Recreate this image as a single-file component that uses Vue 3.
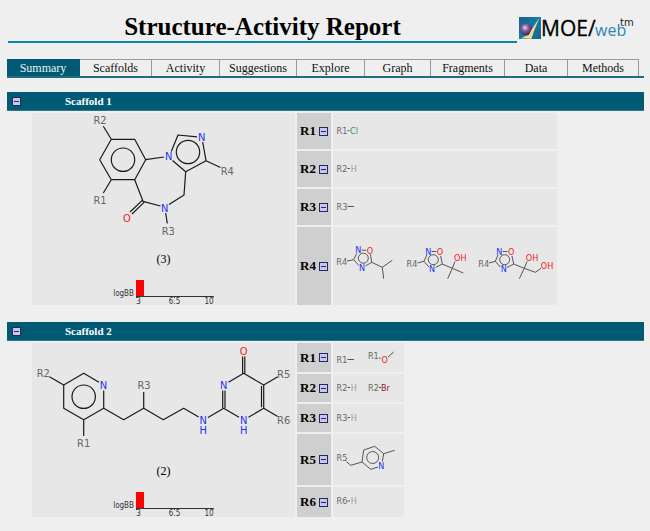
<script setup>
import { reactive } from 'vue'

const tabs = ['Summary', 'Scaffolds', 'Activity', 'Suggestions', 'Explore', 'Graph', 'Fragments', 'Data', 'Methods']

// atom: [x, y, label, kind, label below]; circle: [x, y, radius]
const scaffolds = reactive([
  {
    name: 'Scaffold 1',
    count: 3,
    open: true,
    box: [32, 113, 263, 137],
    bonds:
      'M111.3 139.3H134.7L145.7 159.7L134.7 179.7H111.3L99.7 159.7ZM103.3 126.3L111.3 139.3M103.3 193L111.3 179.7' +
      'M145.7 159.7L164 157M171.3 151.5L178 135L197 136.8M202.7 142L206 160.7L185.7 171.7L172.5 160.5M206 160.7L220.5 167.5' +
      'M185.7 171.7L184 195L169 204.5M160.5 206L143 201.3L134.7 179.7M142.2 200.4L130 212M144 202.4L132 214M165.7 213L167.3 223.5',
    circles: [[123, 159.7, 11.7], [188, 152, 11.7]],
    atoms: [
      [100, 119.7, 'R2', 'r'], [100, 200, 'R1', 'r'], [227.3, 170.7, 'R4', 'r'], [168.3, 230.7, 'R3', 'r'],
      [168.7, 156, 'N', 'n'], [201.7, 137.3, 'N', 'n'], [164.7, 207.5, 'N', 'n'], [127, 218.3, 'O', 'o']
    ],
    groups: [
      { name: 'R1', open: true, mols: [{ box: [333, 113, 224, 36], bonds: 'M347.5 130.7H349.5', circles: [], atoms: [[342, 130.7, 'R1', 'r'], [354, 130.7, 'Cl', 'cl']] }] },
      { name: 'R2', open: true, mols: [{ box: [333, 151, 224, 36], bonds: 'M347.5 168.5H350', circles: [], atoms: [[342, 168.7, 'R2', 'r'], [353.7, 168.7, 'H', 'h']] }] },
      { name: 'R3', open: true, mols: [{ box: [333, 189, 224, 36], bonds: 'M347.5 206.5H354', circles: [], atoms: [[342, 206.7, 'R3', 'r']] }] },
      {
        name: 'R4',
        open: true,
        mols: [
          {
            box: [333, 227, 72, 78],
            bonds: 'M347 261L353.7 259.7L356.7 253.5M361.5 250.2H366.5M370.5 254.5L371.7 262.3L365.5 266M358.8 265.5L353.7 259.7M371.7 262.3L382.3 267.3L392.3 260.3M382.3 267.3L383.7 278.7',
            circles: [[363.3, 258.2, 5]],
            atoms: [[341.7, 262, 'R4', 'r'], [358.3, 250.3, 'N', 'n'], [370, 250.7, 'O', 'o'], [362, 268, 'N', 'n']]
          },
          {
            box: [405, 227, 72, 78],
            bonds: 'M417.5 263L424 261.3L426.8 255M431.5 251.5H436.5M440.7 256L442.3 264L435.5 267.5M428.8 267L424 261.3M442.3 264L452.3 268.3L463.3 273M452.3 268.3L447.7 278.7M452.3 268.3L455 261.5',
            circles: [[433.3, 259.7, 5]],
            atoms: [[412, 264, 'R4', 'r'], [428.3, 251.5, 'N', 'n'], [440, 252, 'O', 'o'], [432, 269.3, 'N', 'n'], [460.3, 258, 'OH', 'o']]
          },
          {
            box: [477, 227, 80, 78],
            bonds: 'M489 263L495.3 261.3L498 255M502.5 251.5H507.5M512 256L513.7 264L507 267.5M500.3 267L495.3 261.3M513.7 264L524.3 268.3L535.3 272.3L541 268.3M524.3 268.3L519.3 278.7M524.3 268.3L527 261.5',
            circles: [[504.7, 259.7, 5]],
            atoms: [[483.7, 264, 'R4', 'r'], [499.3, 251.5, 'N', 'n'], [511.3, 252, 'O', 'o'], [503.7, 269.3, 'N', 'n'], [532, 258, 'OH', 'o'], [547, 266, 'OH', 'o']]
          }
        ]
      }
    ]
  },
  {
    name: 'Scaffold 2',
    count: 2,
    open: true,
    box: [32, 343, 263, 118],
    bonds:
      'M99 381.3L83.7 372.3L63.7 384V407.3L83.7 418.7L103.7 407.3V389.5M63.7 384L49.5 375.8M83.7 418.7V435' +
      'M103.7 407.3L123.7 418.7L143.7 407.3L163.3 418.7L183.7 407.3L198.7 416M143.7 407.3V391M208 416.5L223.7 407.3' +
      'M222.7 389.5V407M225 389.5V407M228.5 381.3L243.7 372.3L263.7 384V407.3L248.5 416.3M261.5 385V406.3M242.6 355.5V372.3M244.8 355.5V372.3' +
      'M223.7 407.3L239 416.3M263.7 384L277.7 375.8M263.7 407.3L277.7 415.5',
    circles: [[83.7, 395.7, 11.7]],
    atoms: [
      [43.3, 372.3, 'R2', 'r'], [83.7, 442, 'R1', 'r'], [144, 384, 'R3', 'r'], [283.7, 372.5, 'R5', 'r'], [283.7, 419, 'R6', 'r'],
      [103.5, 384, 'N', 'n'], [203.3, 419, 'N', 'n', 'H'], [223.7, 384, 'N', 'n'],
      [243.7, 419, 'N', 'n', 'H'], [243.7, 349.5, 'O', 'o']
    ],
    groups: [
      {
        name: 'R1',
        open: true,
        mols: [
          { box: [333, 343, 31, 29], bonds: 'M347.5 359.5H354', circles: [], atoms: [[342, 360, 'R1', 'r']] },
          { box: [364, 343, 40, 29], bonds: 'M379 357.7L380.7 358.5M388 357L393.7 352', circles: [], atoms: [[373.3, 356.2, 'R1', 'r'], [384.7, 360, 'O', 'o']] }
        ]
      },
      {
        name: 'R2',
        open: true,
        mols: [
          { box: [333, 374, 31, 28], bonds: 'M347.5 387.5H350', circles: [], atoms: [[342, 387.7, 'R2', 'r'], [353.7, 387.7, 'H', 'h']] },
          { box: [364, 374, 40, 28], bonds: 'M379 387.5H381', circles: [], atoms: [[373.5, 387.7, 'R2', 'r'], [385.5, 387.7, 'Br', 'br']] }
        ]
      },
      { name: 'R3', open: true, mols: [{ box: [333, 404, 71, 28], bonds: 'M347.5 417.5H350', circles: [], atoms: [[342, 417.7, 'R3', 'r'], [353.7, 417.7, 'H', 'h']] }] },
      {
        name: 'R5',
        open: true,
        mols: [
          {
            box: [333, 434, 71, 51],
            bonds: 'M346.5 461.7L350.7 465.3L362 462L363.7 450L374.7 446.3L383.7 453.7L382.3 461.5M378 467L370.7 469.3L362 462M383.7 453.7L394.7 450.3',
            circles: [[372.7, 457.5, 6]],
            atoms: [[342, 457.7, 'R5', 'r'], [381.3, 465.7, 'N', 'n']]
          }
        ]
      },
      { name: 'R6', open: true, mols: [{ box: [333, 487, 71, 30], bonds: 'M347.5 501H350', circles: [], atoms: [[342, 501, 'R6', 'r'], [353.7, 501, 'H', 'h']] }] }
    ]
  }
])
</script>

<template>
  <div class="page">
    <header class="masthead">
      <h1>Structure-Activity Report</h1>
      <svg class="logo" viewBox="518 13 118 30" width="118" height="30" role="img" aria-label="MOE/web">
        <defs>
          <linearGradient id="tile" x1="0" y1="0" x2="1" y2="1">
            <stop offset="0" stop-color="#1d5f86" />
            <stop offset="0.5" stop-color="#127ba8" />
            <stop offset="1" stop-color="#17648c" />
          </linearGradient>
          <radialGradient id="ball" cx="0.38" cy="0.35" r="0.7">
            <stop offset="0" stop-color="#e6d3ea" />
            <stop offset="0.4" stop-color="#8a5c9c" />
            <stop offset="1" stop-color="#35174c" />
          </radialGradient>
        </defs>
        <rect x="519" y="17" width="22" height="22" fill="url(#tile)" />
        <path d="M534 29L530 33.5L521 38.5H531Z" fill="#f3dc8c" />
        <circle cx="526.500" cy="29.500" r="6" fill="url(#ball)" />
        <path d="M539.500 17.500L532 29L527 38.500H531.500L534 31Z" fill="#f3dc8c" />
        <text class="logo-main" x="541" y="36">MOE/</text>
        <text class="logo-web" x="595" y="36">web<tspan class="logo-tm" x="620" y="26">tm</tspan></text>
      </svg>
    </header>

    <nav class="tabs" aria-label="Report sections">
      <a v-for="(tab, i) in tabs" :key="tab" href="#" :class="{ active: i === 0 }">{{ tab }}</a>
    </nav>

    <section v-for="s in scaffolds" :key="s.name" class="scaffold">
      <div class="bar">
        <button type="button" class="toggle" :aria-label="'Toggle ' + s.name" :aria-expanded="s.open" @click="s.open = !s.open"></button>
        <h2>{{ s.name }}</h2>
      </div>
      <table v-show="s.open">
        <tbody>
          <tr v-for="(g, i) in s.groups" :key="g.name">
            <td v-if="i === 0" class="core" :rowspan="s.groups.length">
              <svg class="mol large" :viewBox="s.box.join(' ')" :width="s.box[2]" :height="s.box[3]">
                <path :d="s.bonds" />
                <circle v-for="(c, k) in s.circles" :key="k" :cx="c[0]" :cy="c[1]" :r="c[2]" />
                <text v-for="(a, k) in s.atoms" :key="k" :x="a[0]" :y="a[1] + 4" :class="a[3]">{{ a[2] }}<tspan v-if="a[4]" :x="a[0]" :y="a[1] + 14">{{ a[4] }}</tspan></text>
              </svg>
              <p class="count">({{ s.count }})</p>
              <svg class="chart" viewBox="110 268 107 37" width="107" height="37">
                <rect x="136" y="280" width="8" height="16" />
                <path d="M136 296.5H213.5M174.5 296V298M213 296V298M136.5 296V298" />
                <text x="134" y="296" text-anchor="end">logBB</text>
                <text x="138.5" y="304" text-anchor="middle">3</text>
                <text x="174.5" y="304" text-anchor="middle">6.5</text>
                <text x="209" y="304" text-anchor="middle">10</text>
              </svg>
            </td>
            <th scope="row">
              <div class="label">
                {{ g.name }}
                <button type="button" class="toggle" :aria-label="'Toggle ' + g.name" :aria-expanded="g.open" @click="g.open = !g.open"></button>
              </div>
            </th>
            <td>
              <div v-show="g.open" class="mols">
                <svg v-for="(m, j) in g.mols" :key="j" class="mol small" :viewBox="m.box.join(' ')" :width="m.box[2]" :height="m.box[3]">
                  <path :d="m.bonds" />
                  <circle v-for="(c, k) in m.circles" :key="k" :cx="c[0]" :cy="c[1]" :r="c[2]" />
                  <text v-for="(a, k) in m.atoms" :key="k" :x="a[0]" :y="a[1] + 3" :class="a[3]">{{ a[2] }}</text>
                </svg>
              </div>
            </td>
          </tr>
        </tbody>
      </table>
    </section>
  </div>
</template>

<style>
body {
  margin: 0;
  background: #efefef;
}
</style>

<style scoped>
.page {
  padding: 13px 6px 0 7px;
  font-family: "Liberation Serif", "Times New Roman", serif;
  color: #000;
}
.masthead {
  display: flex;
  align-items: flex-start;
  gap: 1px;
  padding: 0 8px 0 1px;
}
h1 {
  flex: 1;
  margin: 0;
  border-bottom: 2px solid #0a86ad;
  font-size: 25px;
  line-height: 28px;
  text-align: center;
}
.logo {
  flex: none;
  font-family: "Open Sans", "Noto Sans", sans-serif;
}
.logo-main {
  font-size: 21px;
  stroke: #000;
  stroke-width: 0.3;
}
.logo-web {
  font-size: 16px;
  fill: #2a86b8;
}
.logo-tm {
  font-family: "DejaVu Sans", sans-serif;
  font-size: 10px;
  fill: #222;
}
.tabs {
  display: grid;
  grid-template-columns: 73fr 72fr 68fr 77fr 68fr 66fr 74fr 63fr 71fr;
  margin: 16px 0 14px;
  padding-right: 5px;
  border-bottom: 2px solid #1d6c82;
}
.tabs a {
  border-top: 1px solid #999;
  border-right: 1px solid #999;
  color: #111;
  font-size: 12px;
  line-height: 16px;
  text-align: center;
  text-decoration: none;
}
.tabs a.active {
  border-color: #005a73;
  background: #005a73;
  color: #e8f2f4;
}
.scaffold {
  margin-bottom: 15px;
}
.bar {
  display: flex;
  align-items: center;
  gap: 44px;
  height: 19px;
  padding-left: 5px;
  box-sizing: border-box;
  border-bottom: 1px solid #2f7688;
  background: #005a73;
}
h2 {
  margin: 0;
  color: #fff;
  font-size: 11px;
  line-height: 16px;
}
.toggle {
  width: 9px;
  height: 9px;
  padding: 0;
  border: 1px solid #2a2a48;
  border-radius: 0;
  background: linear-gradient(#2a2a48, #2a2a48) center / 5px 1px no-repeat #c4c4ff;
}
table {
  margin-left: 23px;
  border-spacing: 2px;
}
td,
th {
  padding: 0;
  background: #e7e7e7;
  vertical-align: middle;
}
th {
  background: #cfcfcf;
}
.label {
  display: flex;
  align-items: center;
  gap: 3px;
  padding: 0 3px;
  font-size: 13px;
  line-height: 16px;
}
.mols {
  display: flex;
}
svg {
  display: block;
}
.count {
  margin: 0;
  font-size: 12px;
  line-height: 18px;
  text-align: center;
}
.chart {
  margin: 0 auto;
  font-family: "DejaVu Sans Condensed", "DejaVu Sans", sans-serif;
  font-size: 8px;
}
.chart rect {
  fill: #f00;
}
.chart path {
  fill: none;
  stroke: #333;
}
.chart text {
  fill: #333;
}
.mol {
  font-family: "DejaVu Sans Condensed", "DejaVu Sans", sans-serif;
  text-anchor: middle;
}
.mol path,
.mol circle {
  fill: none;
  stroke: #1a1a1a;
  stroke-linejoin: round;
}
.large {
  font-size: 11px;
  stroke-width: 1.2;
}
.small {
  font-size: 9px;
}
.small path,
.small circle {
  stroke: #555;
}
.r {
  fill: #666;
}
.n {
  fill: #2430f0;
}
.o {
  fill: #f02020;
}
.h {
  fill: #999;
}
.cl {
  fill: #2a9a3a;
}
.br {
  fill: #951515;
}
</style>
